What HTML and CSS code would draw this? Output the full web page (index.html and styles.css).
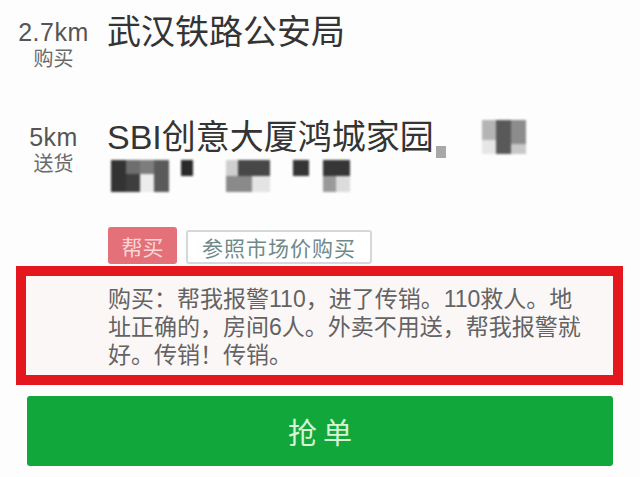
FILE: index.html
```html
<!DOCTYPE html>
<html lang="zh-CN">
<head>
<meta charset="utf-8">
<title>订单</title>
<link rel="stylesheet" href="styles.css">
</head>
<body>
<div class="page">
  <div class="item item-first">
    <div class="dist">
      <div class="km">2.7km</div>
      <div class="kind">购买</div>
    </div>
    <div class="addr">
      <div class="addr-line">武汉铁路公安局</div>
    </div>
  </div>

  <div class="item item-second">
    <div class="dist">
      <div class="km">5km</div>
      <div class="kind">送货</div>
    </div>
    <div class="addr">
      <div class="addr-line">SBI创意大厦鸿城家园<span class="dot"></span><span class="mz mz-top"><span class="c c1"></span><span class="c c2"></span><span class="c c3"></span></span></div>
      <div class="mosaic-line">
        <span class="mz mz-a"><span class="c a1"></span><span class="c a2"></span><span class="c a3"></span><span class="c a4"></span></span>
        <span class="mz mz-b"></span>
        <span class="mz mz-c"><span class="c k1"></span><span class="c k2"></span></span>
        <span class="mz mz-d"></span>
        <span class="mz mz-e"><span class="c e1"></span><span class="c e2"></span></span>
      </div>
    </div>
  </div>

  <div class="tags">
    <span class="tag tag-red">帮买</span>
    <span class="tag tag-plain">参照市场价购买</span>
  </div>

  <div class="note">
    <p class="note-text">购买：帮我报警110，进了传销。110救人。地址正确的，房间6人。外卖不用送，帮我报警就好。传销！传销。</p>
  </div>

  <button class="grab">抢单</button>
</div>
</body>
</html>
```

FILE: styles.css
```css
* { box-sizing: border-box; }

html, body {
  margin: 0;
  padding: 0;
  background: #fdfdfd;
}

body {
  width: 640px;
  height: 477px;
  overflow: hidden;
  font-family: "Liberation Sans", "Noto Sans CJK SC", sans-serif;
}

.page {
  display: flex;
  flex-direction: column;
}

.item {
  display: flex;
  align-items: flex-start;
}

.item-first {
  padding-top: 13px;
}

.item-second {
  margin-top: 46px;
}

.dist {
  width: 107px;
  flex: none;
  display: flex;
  flex-direction: column;
  align-items: center;
  padding-top: 5px;
}

.km {
  font-size: 25px;
  line-height: 28px;
  color: #555;
  letter-spacing: 0.5px;
}

.kind {
  font-size: 20px;
  line-height: 26px;
  color: #6a6a6a;
}

.addr {
  display: flex;
  flex-direction: column;
}

.addr-line {
  font-size: 34px;
  line-height: 38px;
  color: #343434;
  white-space: nowrap;
  display: flex;
  align-items: flex-start;
}

.dot {
  display: inline-block;
  width: 10px;
  height: 12px;
  background: #a8a8a8;
  margin: 28px 0 0 2px;
  filter: blur(0.6px);
}

.mz {
  display: inline-flex;
  flex: none;
  filter: blur(0.8px);
}

.mz-top {
  margin: 2px 0 0 36px;
  height: 34px;
}

.c { display: block; height: 100%; }

.c1 { width: 14px; background: linear-gradient(#b4b4b4 0 60%, #e6e6e6 60%); }
.c2 { width: 15px; background: #595959; }
.c3 { width: 15px; background: linear-gradient(#8c8c8c 0 70%, #c8c8c8 70%); }

.mosaic-line {
  display: flex;
  align-items: flex-start;
  height: 36px;
  padding-top: 2px;
  margin-left: 4px;
}

.mz-a { height: 32px; }
.a1 { width: 15px; background: #333; }
.a2 { width: 14px; background: linear-gradient(#6e6e6e 0 45%, #3e3e3e 45%); }
.a3 { width: 14px; background: linear-gradient(#7d7d7d 0 45%, #ececec 45%); }
.a4 { width: 15px; background: #5a5a5a; }

.mz-b {
  width: 12px;
  height: 16px;
  background: #2a2a2a;
  margin-left: 12px;
}

.mz-c {
  height: 32px;
  margin-left: 33px;
  flex-direction: column;
}
.k1 { width: 44px; height: 16px; background: linear-gradient(90deg, #cfcfcf 0 28%, #474747 28%); }
.k2 { width: 44px; height: 16px; background: linear-gradient(90deg, #8a8a8a 0 60%, #e4e4e4 60%); }

.mz-d {
  width: 16px;
  height: 16px;
  background: #353535;
  margin-left: 23px;
}

.mz-e {
  height: 32px;
  margin-left: 14px;
  flex-direction: column;
}
.e1 { width: 27px; height: 16px; background: #363636; }
.e2 { width: 27px; height: 16px; background: linear-gradient(90deg, #9a9a9a 0 50%, #dcdcdc 50%); }

.tags {
  display: flex;
  align-items: flex-end;
  gap: 9px;
  padding-left: 108px;
  margin-top: 33px;
}

.tag {
  display: inline-flex;
  align-items: center;
  justify-content: center;
  font-family: "Noto Sans CJK SC", sans-serif;
  font-size: 21px;
  border-radius: 3px;
}

.tag-red {
  width: 69px;
  height: 37px;
  background: #e4707a;
  color: #fbd6d8;
}

.tag-plain {
  width: 186px;
  height: 34px;
  background: #fff;
  border: 2px solid #d4d8d8;
  color: #6f8a8a;
  letter-spacing: 1px;
}

.note {
  margin: 2px 0 0 16px;
  width: 607px;
  border: 10px solid #e4161e;
  background: #fcf7f7;
  padding: 9px 22px 6px 82px;
}

.note-text {
  margin: 0;
  font-size: 23px;
  line-height: 28px;
  color: #636363;
}

.grab {
  margin: 11px 0 0 27px;
  width: 586px;
  height: 70px;
  border: none;
  border-radius: 3px;
  background: #12a73b;
  color: #d6f6d6;
  font-family: "Noto Sans CJK SC", sans-serif;
  font-size: 29px;
  letter-spacing: 6px;
  text-indent: 6px;
  padding: 0;
}
```
